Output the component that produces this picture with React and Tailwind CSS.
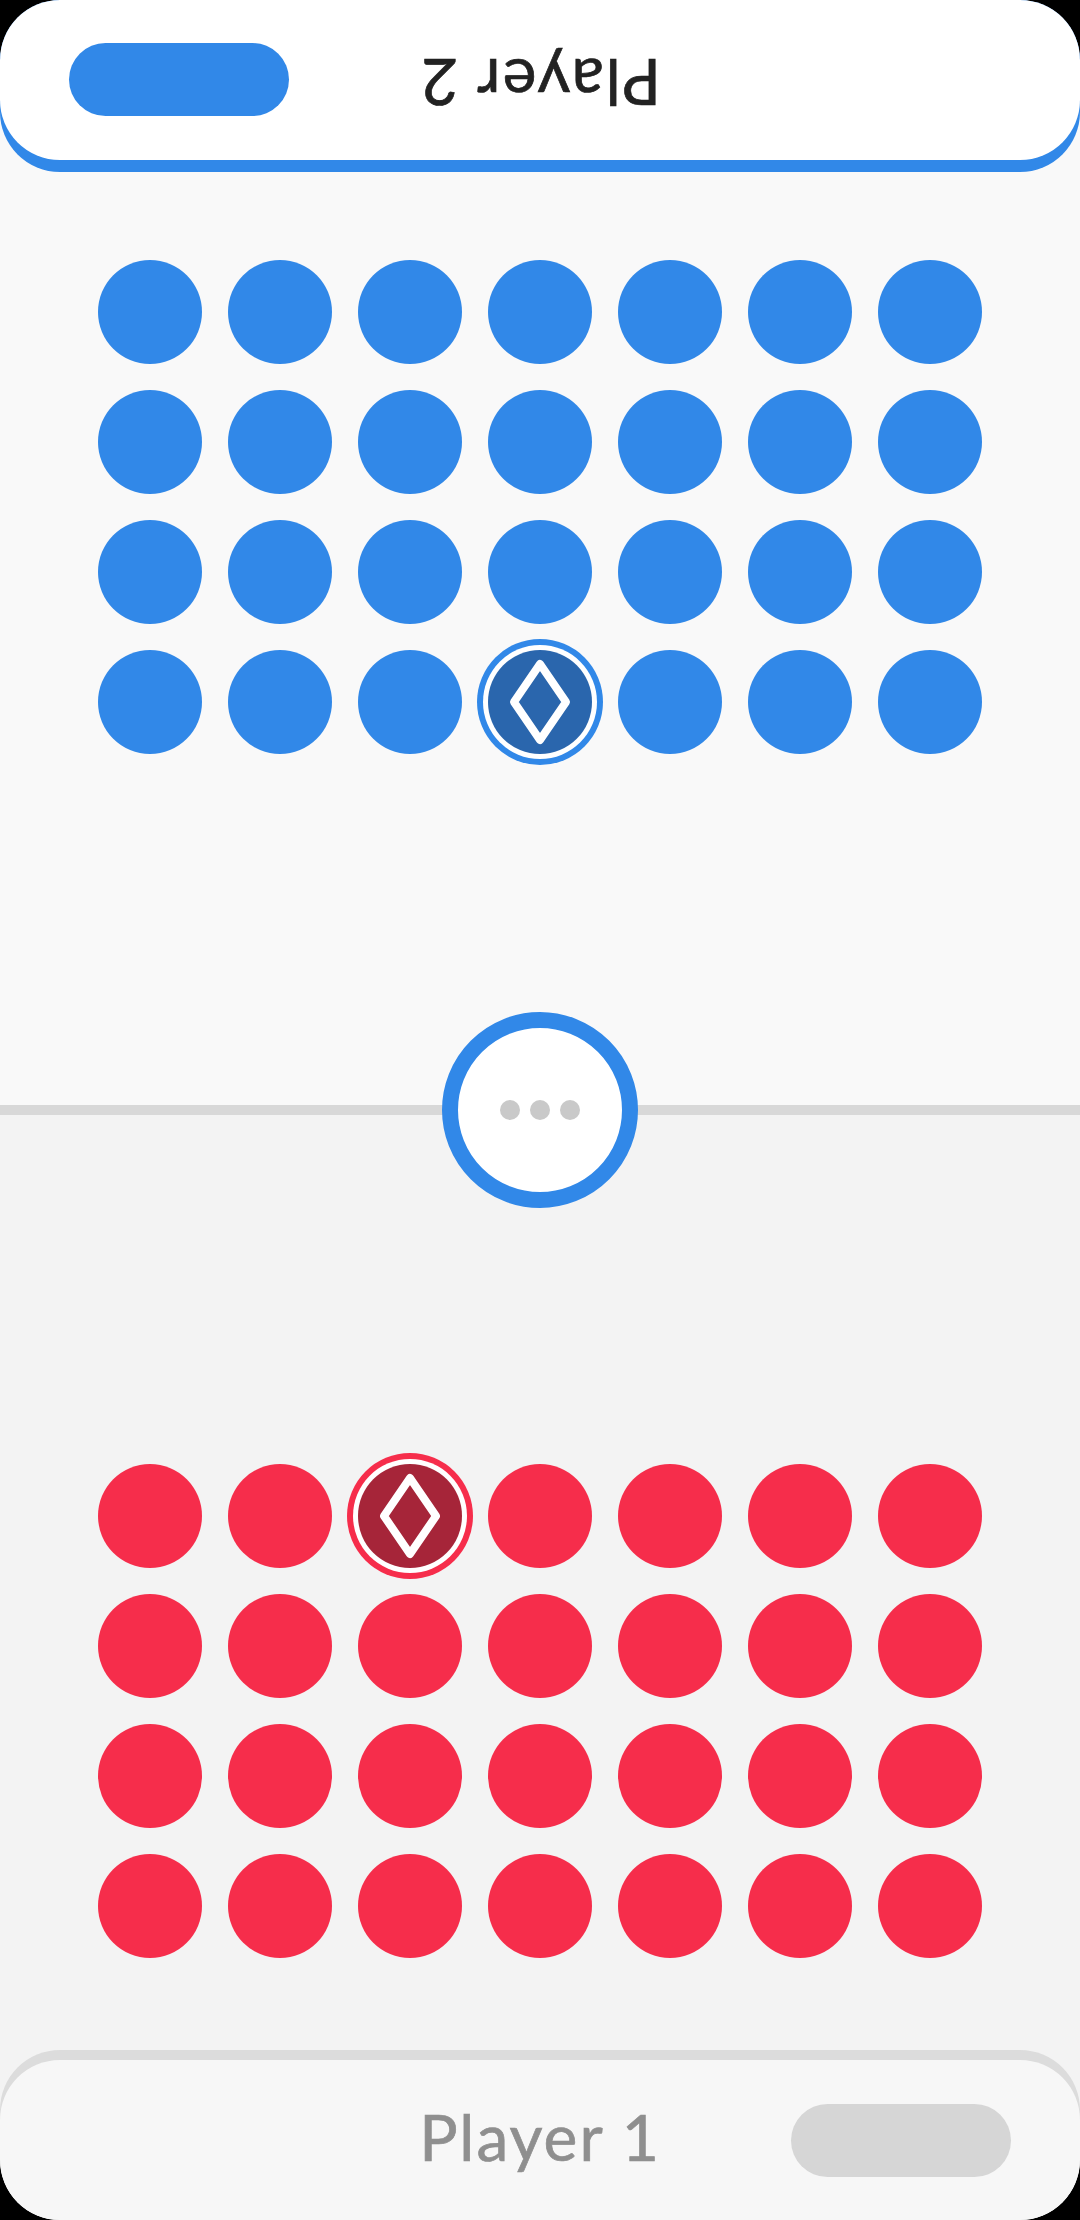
import React from 'react';

const DOTS = Array.from({ length: 28 }, (_, i) => i);

function Diamond() {
  return (
    <svg width="104" height="104" viewBox="0 0 104 104" fill="none" className="block">
      <path d="M52 14 L78 52 L52 90 L26 52 Z" stroke="#fff" strokeWidth="8" strokeLinejoin="round" />
    </svg>
  );
}

function Board({ dotClass, selected, selectedClass }) {
  return (
    <div className="grid grid-cols-[repeat(7,104px)] gap-[26px] justify-center">
      {DOTS.map((i) =>
        i === selected ? (
          <div key={i} className={`w-[104px] h-[104px] rounded-full ring-[6px] ring-offset-[5px] ring-offset-white ${selectedClass}`}>
            <Diamond />
          </div>
        ) : (
          <div key={i} className={`w-[104px] h-[104px] rounded-full ${dotClass}`}></div>
        ),
      )}
    </div>
  );
}

function PlayerRow({ name, textClass, pillClass, flipped }) {
  return (
    <div className={`h-full grid grid-cols-[1fr_auto_1fr] items-center ${flipped ? 'rotate-180' : ''}`}>
      <div></div>
      <span className={`text-[64px] leading-none tracking-[2px] mb-[6px] [-webkit-text-stroke:0.7px_currentColor] ${textClass}`}>{name}</span>
      <div className={`justify-self-end mr-[69px] w-[220px] h-[73px] rounded-full ${pillClass}`}></div>
    </div>
  );
}

export default function App() {
  return (
    <div className="w-[1080px] h-[2220px] bg-black font-['Lato','Liberation_Sans',sans-serif]">
      <div className="relative h-full rounded-[60px] overflow-hidden flex flex-col">
        <section className="h-[1105px] bg-[#f9f9f9]">
          {/* coloured slab sits behind the white card, so the edge keeps its thickness round the corners */}
          <header className="h-[172px] bg-[#3188e8] rounded-[60px]">
            <div className="h-[160px] bg-white rounded-[60px]">
              <PlayerRow name="Player 2" textClass="text-[#222222]" pillClass="bg-[#3188e8]" flipped />
            </div>
          </header>
          <div className="pt-[88px]">
            <Board dotClass="bg-[#3188e8]" selected={24} selectedClass="bg-[#2a66ad] ring-[#3188e8]" />
          </div>
        </section>

        <div className="h-[10px] bg-[#d8d8d8]"></div>

        <section className="flex-1 bg-[#f3f3f3] flex flex-col justify-end">
          <div className="pb-[92px]">
            <Board dotClass="bg-[#f62d4b]" selected={2} selectedClass="bg-[#a62539] ring-[#f62d4b]" />
          </div>
          <footer className="h-[170px] bg-[#dcdcdc] rounded-[60px] pt-[10px]">
            <div className="h-[160px] bg-[#f7f7f7] rounded-[60px]">
              <PlayerRow name="Player 1" textClass="text-[#8f8f8f]" pillClass="bg-[#d6d6d6]" />
            </div>
          </footer>
        </section>

        <div className="absolute left-[442px] top-[1012px] w-[196px] h-[196px] rounded-full bg-white border-[16px] border-[#3188e8] flex items-center justify-center gap-[10px]">
          <span className="w-[20px] h-[20px] rounded-full bg-[#c9c9c9]"></span>
          <span className="w-[20px] h-[20px] rounded-full bg-[#c9c9c9]"></span>
          <span className="w-[20px] h-[20px] rounded-full bg-[#c9c9c9]"></span>
        </div>
      </div>
    </div>
  );
}
